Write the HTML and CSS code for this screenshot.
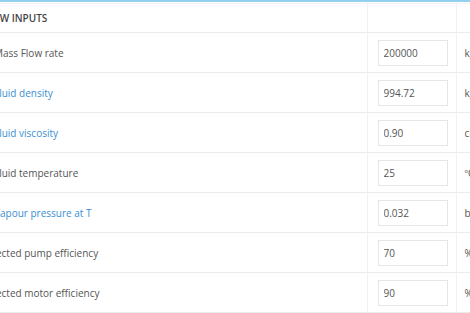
FILE: index.html
```html
<!DOCTYPE html>
<html>
<head>
<meta charset="utf-8">
<link rel="stylesheet" href="styles.css">
</head>
<body>
<div class="panel">
  <table class="grid">
    <colgroup>
      <col class="c-label">
      <col class="c-val">
      <col class="c-unit">
    </colgroup>
    <thead>
      <tr>
        <th class="label head">FLOW INPUTS</th>
        <th class="val"></th>
        <th class="unit"></th>
      </tr>
    </thead>
    <tbody>
      <tr>
        <td class="label">Mass Flow rate</td>
        <td class="val"><input class="box" type="text" value="200000"></td>
        <td class="unit">kg/h</td>
      </tr>
      <tr>
        <td class="label"><a class="link" href="#">Fluid density</a></td>
        <td class="val"><input class="box" type="text" value="994.72"></td>
        <td class="unit">kg/m3</td>
      </tr>
      <tr>
        <td class="label"><a class="link" href="#">Fluid viscosity</a></td>
        <td class="val"><input class="box" type="text" value="0.90"></td>
        <td class="unit">cP</td>
      </tr>
      <tr>
        <td class="label">Fluid temperature</td>
        <td class="val"><input class="box" type="text" value="25"></td>
        <td class="unit"><sup class="deg">o</sup>C</td>
      </tr>
      <tr>
        <td class="label"><a class="link" href="#">Vapour pressure at T</a></td>
        <td class="val"><input class="box" type="text" value="0.032"></td>
        <td class="unit">bar</td>
      </tr>
      <tr>
        <td class="label sub">Expected pump efficiency</td>
        <td class="val"><input class="box" type="text" value="70"></td>
        <td class="unit">%</td>
      </tr>
      <tr>
        <td class="label sub">Expected motor efficiency</td>
        <td class="val"><input class="box" type="text" value="90"></td>
        <td class="unit">%</td>
      </tr>
    </tbody>
  </table>
</div>
</body>
</html>
```
FILE: styles.css
```css
html, body {
  margin: 0;
  padding: 0;
  background: #ffffff;
  overflow: hidden;
}
body {
  width: 470px;
  height: 313px;
  font-family: "Open Sans", "Liberation Sans", sans-serif;
  font-size: 10px;
  color: #555555;
}
.panel {
  border-top: 2px solid #93cfee;
  margin-left: -14px;
  width: 600px;
}
.grid {
  border-collapse: collapse;
  border-top: 1px solid #f2f2f2;
  margin-top: 1px;
  table-layout: fixed;
  width: 591px;
}
.c-label { width: 381px; }
.c-val { width: 89px; }
.c-unit { width: 121px; }
.grid th, .grid td {
  border-bottom: 1px solid #ebebeb;
  padding: 0;
  vertical-align: middle;
  white-space: nowrap;
  overflow: hidden;
}
.grid thead th {
  height: 28px;
}
.grid tbody td {
  height: 39px;
}
.label {
  padding-left: 8px !important;
  text-align: left;
  border-right: 1px solid #f1f1f1;
}
.head {
  font-weight: 600;
  color: #444444;
  text-indent: -13px;
}
.sub {
  text-indent: -15px;
}
.val {
  border-right: 1px solid #f1f1f1;
}
.unit {
  padding-left: 8px !important;
  text-align: left;
}
.link {
  color: #3a8fd1;
  text-decoration: none;
}
.box {
  display: block;
  box-sizing: border-box;
  width: 70px;
  height: 26px;
  margin-left: 10px;
  border: 1px solid #e6e6e6;
  padding: 0 5px;
  font-family: "Open Sans", "Liberation Sans", sans-serif;
  font-size: 10px;
  color: #555555;
  background: #fff;
  outline: none;
}
.deg {
  font-size: 6px;
}
```
